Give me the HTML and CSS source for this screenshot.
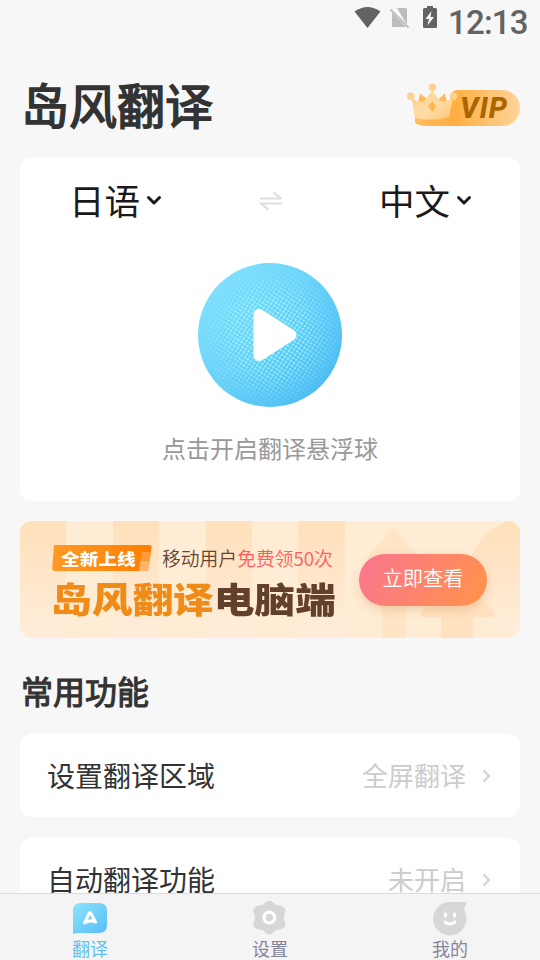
FILE: index.html
```html
<!DOCTYPE html>
<html lang="zh-CN">
<head>
<meta charset="utf-8">
<title>岛风翻译</title>
<link rel="stylesheet" href="styles.css">
</head>
<body>
<div class="app">
  <header class="status">
    <svg class="status-icons" width="90" height="32" viewBox="354 0 90 32">
      <path d="M354.500 11.500Q367.500 2.500 380.500 11.500L367.500 28Z" fill="#636363"/>
      <path d="M397 8h8.500q1.500 0 1.500 1.500v15.500zM392 12.500L406 27h-12.500q-1.500 0-1.500-1.500z" fill="#bdbdbd"/>
      <path d="M390.500 9.500L408.500 27.500" stroke="#bdbdbd" stroke-width="1.800"/>
      <path d="M427 8V6h6v2h2.500q1.500 0 1.500 1.500v17q0 1.500-1.500 1.500h-11q-1.500 0-1.500-1.500v-17q0-1.500 1.500-1.500z" fill="#636363"/>
      <path d="M431.500 11L425.500 19h3.500l-1.500 6.500 6.500-8.500h-3.500z" fill="#f7f7f7"/>
    </svg>
    <span class="clock">12:13</span>
  </header>

  <div class="heading">
    <h1>岛风翻译</h1>
    <div class="vip">
      <svg class="crown" width="52" height="44" viewBox="0 0 52 44">
        <defs>
          <linearGradient id="crown" x1="0" y1="0" x2="1" y2="1"><stop offset="0" stop-color="#ffd08a"/><stop offset=".55" stop-color="#ffdca7"/><stop offset="1" stop-color="#ffc476"/></linearGradient>
          <linearGradient id="base"><stop offset="0" stop-color="#ffbd5a"/><stop offset="1" stop-color="#ffad3e"/></linearGradient>
        </defs>
        <path d="M11 20l2-9.500 9 7-7 10zM40 20l-2-9.500-8 7 6 10z" fill="#ffb95a"/>
        <path d="M8 33Q25 39 43 31L52 34V43H20Q8 42 8 39Z" fill="url(#base)"/>
        <path d="M4.500 15Q14 21 18 17L25.500 7.500L32 17Q36 21 46 15L42 34Q25 39 8 35Z" fill="url(#crown)"/>
        <circle cx="3.800" cy="13.300" r="3.700" fill="#ffd18c"/><circle cx="25.500" cy="4.300" r="3.700" fill="#ffd18c"/><circle cx="46.500" cy="13.300" r="3.700" fill="#ffd18c"/>
        <path d="M25.200 18l4 5.500-4 5.500-4-5.500z" fill="#ffb64f"/>
      </svg>
      <span class="vip-text">VIP</span>
    </div>
  </div>

  <section class="translate-card">
    <div class="languages">
      <div class="lang">日语<svg width="16" height="11" viewBox="0 0 16 11"><path d="M2.500 2.500L8 8l5.500-5.500" fill="none" stroke="#1a1a1a" stroke-width="3" stroke-linecap="round" stroke-linejoin="round"/></svg></div>
      <svg class="swap" width="24" height="20" viewBox="0 0 24 20"><path d="M2 7.500H22L15 1.800M22 12.500H2L9 18.200" fill="none" stroke="#dddee1" stroke-width="2.200" stroke-linecap="round" stroke-linejoin="round"/></svg>
      <div class="lang">中文<svg width="16" height="11" viewBox="0 0 16 11"><path d="M2.500 2.500L8 8l5.500-5.500" fill="none" stroke="#1a1a1a" stroke-width="3" stroke-linecap="round" stroke-linejoin="round"/></svg></div>
    </div>
    <svg class="play" width="144" height="144" viewBox="0 0 144 144">
      <defs>
        <linearGradient id="ball" x1=".1" y1=".15" x2=".87" y2=".87"><stop offset="0" stop-color="#7fe0fd"/><stop offset=".5" stop-color="#67cff8"/><stop offset="1" stop-color="#4abcf3"/></linearGradient>
        <pattern id="dots" width="3.700" height="3.700" patternUnits="userSpaceOnUse" patternTransform="rotate(33)"><circle cx="1.850" cy="1.850" r="1.150" fill="#a5fbff"/></pattern>
        <radialGradient id="fade"><stop offset="0" stop-color="#fff"/><stop offset=".5" stop-color="#fff" stop-opacity=".85"/><stop offset="1" stop-color="#fff" stop-opacity=".05"/></radialGradient>
        <mask id="dotmask"><circle cx="72" cy="72" r="72" fill="url(#fade)"/></mask>
      </defs>
      <circle cx="72" cy="72" r="72" fill="url(#ball)"/>
      <rect width="144" height="144" fill="url(#dots)" mask="url(#dotmask)"/>
      <path d="M61 51.500L93 72L61 92.500Z" fill="#fff" stroke="#fff" stroke-width="11" stroke-linejoin="round"/>
    </svg>
    <p class="hint">点击开启翻译悬浮球</p>
  </section>

  <section class="banner">
    <svg class="banner-art" width="500" height="117" viewBox="0 0 500 117">
      <defs><linearGradient id="shade" x1="0" y1="0" x2="0" y2="117" gradientUnits="userSpaceOnUse"><stop offset="0" stop-color="#ffe0ba"/><stop offset="1" stop-color="#ffeddb"/></linearGradient></defs>
      <path d="M0 0H46V117H0ZM93 0h46v117H93ZM186 0h46v117h-46ZM278 0h47v117h-47Z" fill="url(#shade)"/>
      <path d="M500 0H488Q438 22 452 72Q462 103 500 117Z" fill="url(#shade)"/>
      <path d="M371 9q2.500-2.500 5 0l23 27q3 5-2 6H386v75H362V42H349q-4-2-1-7z" fill="#ffe4c5"/>
      <path d="M438 52L474 91q2 4-2 5H453v21H421V96H403q-4-1-2-5z" fill="#ffe1bf"/>
    </svg>
    <div class="banner-copy">
      <div class="banner-top">
        <span class="badge"><b>全新上线</b><i></i></span>
        <span class="offer">移动用户<em>免费领50次</em></span>
      </div>
      <div class="banner-title"><span>岛风翻译</span>电脑端</div>
    </div>
    <div class="view-button">立即查看</div>
  </section>

  <h2>常用功能</h2>
  <div class="row"><span class="label">设置翻译区域</span><span class="value">全屏翻译</span><svg width="10" height="14" viewBox="0 0 10 14"><path d="M2 2l5 5-5 5" fill="none" stroke="#d0d0dc" stroke-width="2" stroke-linecap="round"/></svg></div>
  <div class="row"><span class="label">自动翻译功能</span><span class="value">未开启</span><svg width="10" height="14" viewBox="0 0 10 14"><path d="M2 2l5 5-5 5" fill="none" stroke="#d0d0dc" stroke-width="2" stroke-linecap="round"/></svg></div>
</div>

<nav class="tabs">
  <div class="tab active">
    <svg width="36" height="36" viewBox="0 0 36 36">
      <defs><linearGradient id="tab" x1="0" y1="0" x2="1" y2="1"><stop offset="0" stop-color="#8ce4fb"/><stop offset="1" stop-color="#58bdf5"/></linearGradient></defs>
      <path d="M9 2H27Q35 2 35 10V24Q35 32 27 32H8Q4 32 2 33Q1 33 1 32V10Q1 2 9 2Z" fill="url(#tab)"/>
      <path d="M12.500 22L17 12.500q1-1.500 2 0L23.500 21q-5-2.500-10 .5" fill="none" stroke="#fff" stroke-width="3" stroke-linecap="round" stroke-linejoin="round"/>
    </svg>
    <span>翻译</span>
  </div>
  <div class="tab">
    <svg width="36" height="36" viewBox="0 0 36 36">
      <g transform="translate(-.700 -.500)"><path d="M14 2Q18-2 22 2Q24.500 5.500 28 5Q35 6 34 11.500Q32.500 14 32.500 17Q32.500 20 34 22.500Q35 28 28 29Q24.500 28.500 22 32Q18 36 14 32Q11.500 28.500 8 29Q1 28 2 22.500Q3.500 20 3.500 17Q3.500 14 2 11.500Q1 6 8 5Q11.500 5.500 14 2Z" fill="#d5d7d9"/>
      <circle cx="18" cy="17" r="5.300" fill="none" stroke="#fff" stroke-width="3.200"/></g>
    </svg>
    <span>设置</span>
  </div>
  <div class="tab">
    <svg width="36" height="36" viewBox="0 0 36 36">
      <path d="M18 1H33Q35 1 34 3L32 8Q35 13 34.500 18A16.700 16.700 0 1 1 18 1Z" fill="#d5d7d9"/>
      <path d="M13.500 13v2M22.500 13v2" stroke="#fff" stroke-width="3" stroke-linecap="round"/>
      <path d="M13 21q5 4 10 0" fill="none" stroke="#fff" stroke-width="3" stroke-linecap="round"/>
    </svg>
    <span>我的</span>
  </div>
</nav>
</body>
</html>
```
FILE: styles.css
```css
* { box-sizing: border-box; }
body {
  margin: 0;
  height: 960px;
  overflow: hidden;
  display: flex;
  flex-direction: column;
  background: #f7f7f7;
  color: #333;
  font-family: "Noto Sans CJK SC", sans-serif;
}
svg { display: block; flex: none; }
h1, h2, p { margin: 0; }
.app { height: 893px; padding: 0 20px; overflow: hidden; }
.status {
  height: 44px;
  display: flex;
  justify-content: flex-end;
  margin-right: -8px;
}
.clock {
  width: 80px;
  margin-left: 4px;
  font: 500 33px/46px Roboto, sans-serif;
  letter-spacing: -.8px;
  color: #636363;
  white-space: nowrap;
}
.heading {
  height: 114px;
  display: flex;
  justify-content: space-between;
  align-items: flex-start;
}
h1 {
  margin: 25px 0 0 1px;
  font-size: 48px;
  line-height: 69px;
  font-weight: 400;
  -webkit-text-stroke: 1.600px #333;
}
.vip {
  width: 70px;
  height: 36px;
  margin-top: 46px;
  display: flex;
  align-items: center;
  border-radius: 8px 18px 18px 0;
  background: linear-gradient(90deg, #ffad3d, #ffd397);
}
.crown { margin: -7px 0 0 -43px; }
.vip-text {
  margin-left: 1px;
  color: #a96600;
  font: italic 800 29px/36px Roboto, sans-serif;
  letter-spacing: 1px;
}
.translate-card {
  height: 343px;
  border-radius: 10px;
  background: #fff;
  display: flex;
  flex-direction: column;
  align-items: center;
}
.languages {
  width: 100%;
  height: 85px;
  padding: 0 48px 0 49px;
  display: flex;
  justify-content: space-between;
  align-items: center;
}
.lang {
  display: flex;
  align-items: center;
  gap: 6px;
  color: #1a1a1a;
  font-size: 35.500px;
  line-height: 50px;
  padding-bottom: 2px;
}
.lang svg { margin-top: 2px; }
.play { margin-top: 20px; }
.hint { margin-top: 22px; color: #999; font-size: 24px; line-height: 38px; }
.banner {
  position: relative;
  height: 117px;
  margin-top: 20px;
  padding: 22px 33px 0 32px;
  display: flex;
  justify-content: space-between;
  border-radius: 12px;
  overflow: hidden;
  background: #ffecd4;
}
.banner-art { position: absolute; inset: 0; }
.banner-copy, .view-button { position: relative; }
.banner-top { display: flex; align-items: center; height: 30px; gap: 10px; }
.badge {
  width: 100px;
  height: 26px;
  padding-left: 9px;
  display: flex;
  justify-content: space-between;
  align-items: flex-end;
  color: #fff;
  font-size: 18.700px;
  line-height: 26px;
  border-radius: 3px;
  background: linear-gradient(90deg, #ff9926, #ff7e00);
  clip-path: polygon(2% 0, 100% 0, 96% 100%, 0 100%);
}
.badge b { font-weight: 900; transform: scaleY(.88); }
.badge i {
  width: 13px;
  height: 19px;
  background: linear-gradient(#ff9a39 50%, #ffb66b 50%);
  clip-path: polygon(22% 0, 100% 0, 100% 100%, 0 100%);
}
.offer { color: #664331; font-size: 18.800px; font-weight: 350; line-height: 30px; white-space: nowrap; }
.offer em { color: #ff5d5d; font-style: normal; }
.banner-title {
  height: 50px;
  margin: 0 0 0 -1px;
  color: #63402b;
  font-size: 40.700px;
  line-height: 50px;
  font-weight: 900;
  white-space: nowrap;
  transform: scaleY(.87);
}
.banner-title span { color: #ef8b16; }
.view-button {
  width: 128px;
  height: 52px;
  margin-top: 11px;
  border-radius: 26px;
  color: #fff;
  font-size: 20.300px;
  font-weight: 350;
  line-height: 47px;
  text-align: center;
  background: linear-gradient(120deg, #fa7889 10%, #ff9150 90%);
  box-shadow: 0 4px 10px rgba(190, 120, 60, .25);
}
h2 {
  margin: 28px 0 0 1px;
  font-size: 32px;
  line-height: 48px;
  font-weight: 400;
  -webkit-text-stroke: 1.100px #333;
}
.row {
  height: 83px;
  margin-top: 21px;
  padding: 0 28px 2px 27px;
  display: flex;
  align-items: center;
  border-radius: 12px;
  background: #fff;
}
h2 + .row { margin-top: 20px; }
.row svg { margin-top: 3px; }
.label { flex: 1; font-size: 28px; line-height: 42px; }
.value { margin-right: 16px; color: #ccc; font-size: 26px; line-height: 40px; }
.tabs {
  height: 67px;
  display: flex;
  border-top: 1px solid #dcdcdc;
  background: #f4f4f4;
}
.tab {
  flex: 1;
  padding-top: 7px;
  display: flex;
  flex-direction: column;
  align-items: center;
  color: #85859a;
  font-size: 18px;
  line-height: 23px;
}
.tab.active { color: #60c1f2; }
```
